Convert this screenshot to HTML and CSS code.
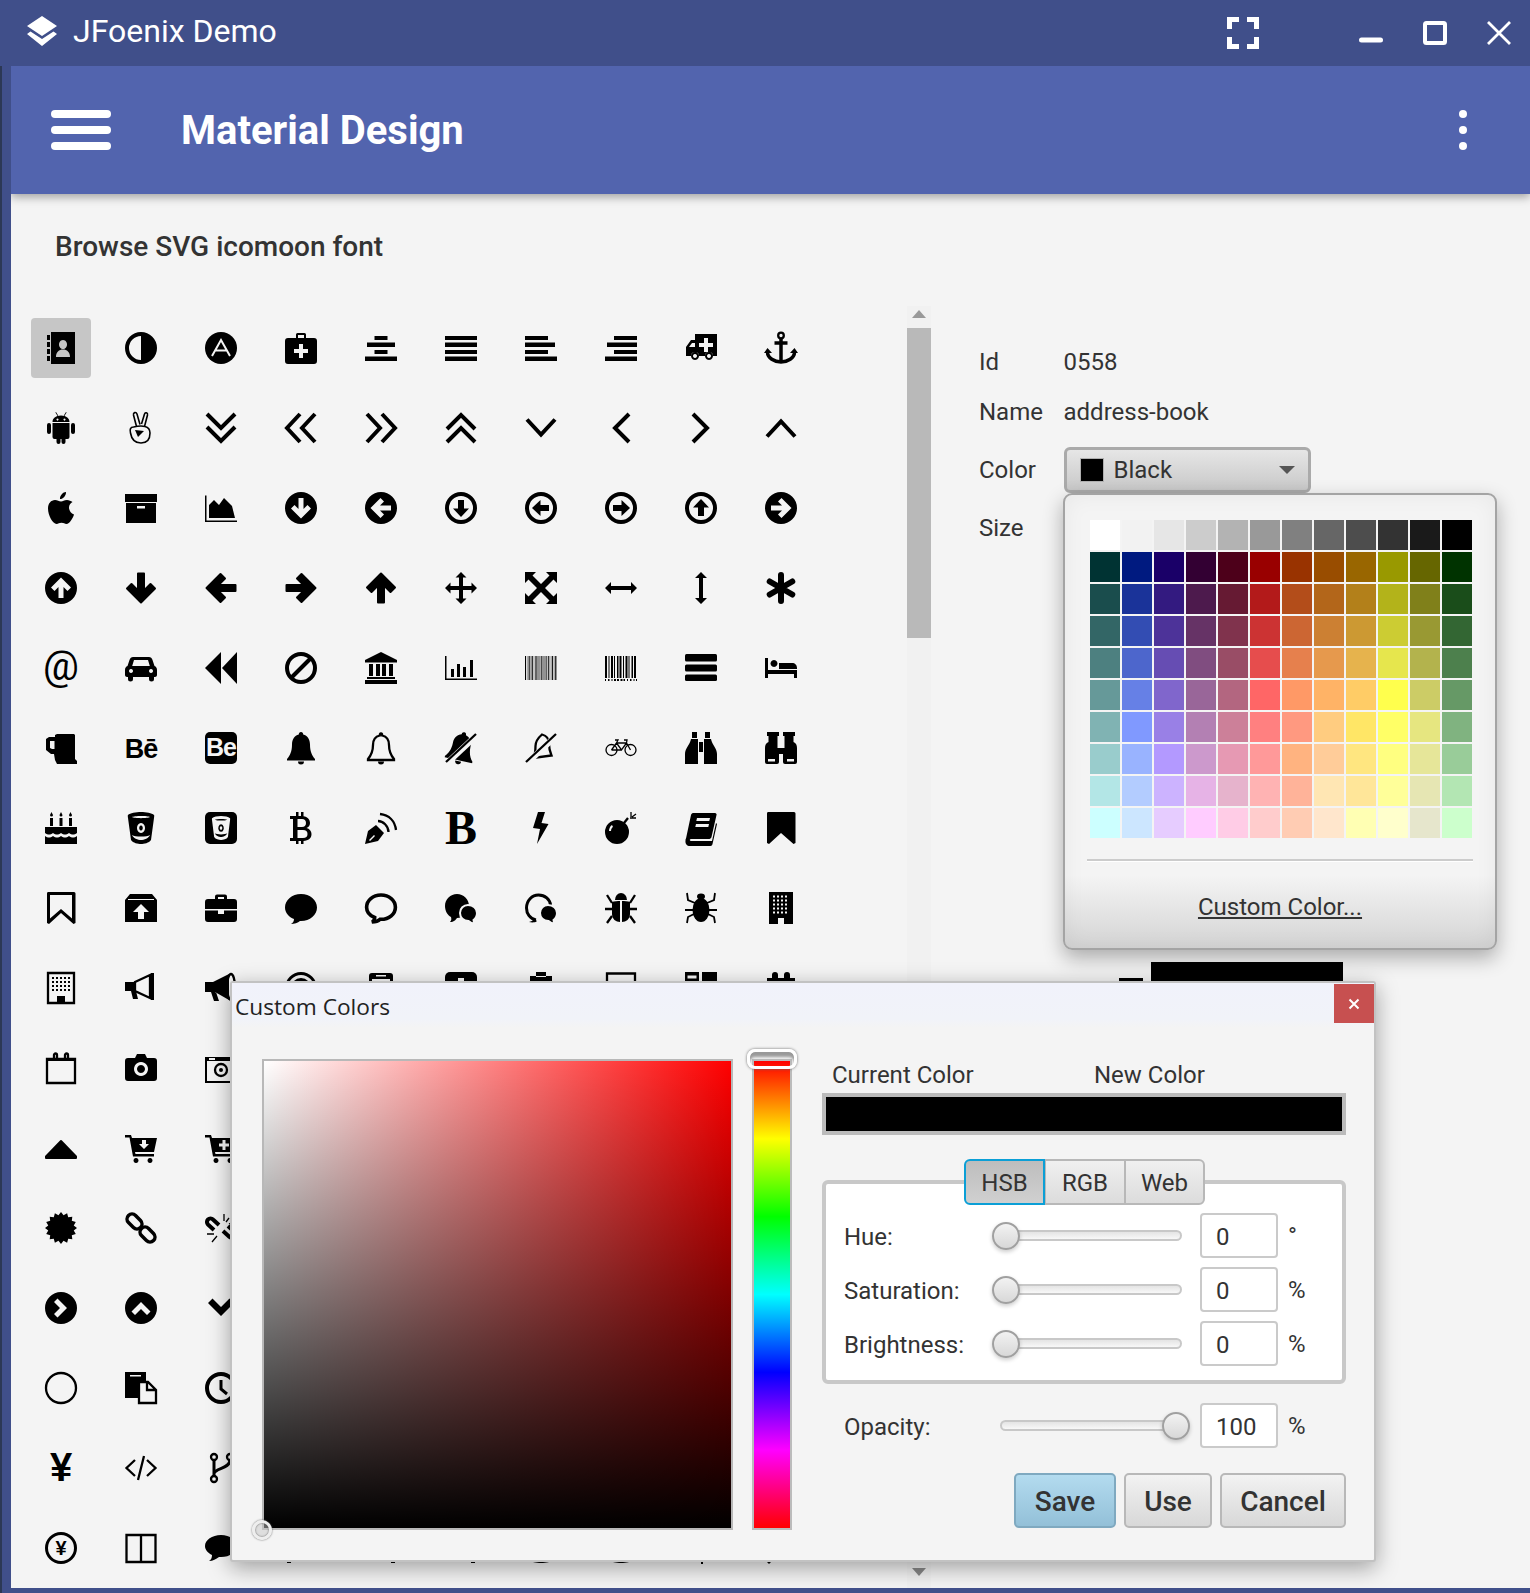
FILE: index.html
```html
<!DOCTYPE html>
<html lang="en">
<head>
<meta charset="utf-8">
<title>JFoenix Demo</title>
<link rel="stylesheet" href="styles.css">
</head>
<body>
<svg class="defs" width="0" height="0">
	<defs>
		<path id="discArrow" d="M16 0a16 16 0 1 0 0 32 16 16 0 0 0 0-32z M13.500 6h5v11l4-4 3.500 3.500L16 26.500 6 16.500 9.500 13l4 4z"/>
		<path id="ringArrow" d="M16 0a16 16 0 1 0 0 32 16 16 0 0 0 0-32z M16 4a12 12 0 1 1 0 24 12 12 0 0 1 0-24z M13 8h6v8.500h5l-8 8.500-8-8.500h5z"/>
		<path id="boldArrow" d="M13 1.500h6v17l6.500-6.500 4.500 4.500L16 30.500 2 16.500 6.500 12l6.500 6.500z"/>
		<path id="discChevron" d="M16 0a16 16 0 1 0 0 32 16 16 0 0 0 0-32z M12.500 6.500l9.500 9.500-9.500 9.500-3.500-3.500 6-6-6-6z"/>
		<path id="longArrow" d="M0 16l6-6v4h20v-4l6 6-6 6v-4H6v4z"/>
		<path id="bell" d="M16 0c1.500 0 2.200 1 2.200 2.500 4.300 1 6.800 5 6.800 10 0 7 2 11 5 14.500v1.500H2V27c3-3.500 5-7.500 5-14.500 0-5 2.500-9 6.800-10C13.800 1 14.500 0 16 0z M13 29.500h6a3 3 0 0 1-6 0z"/>
		<path id="bucket" d="M3 3c2-2 8-3 13-3s11 1 13 3c.5.500 0 2.500 0 3L26 28c-2 3-7 4-10 4s-8-1-10-4L3 6c0-.5-.5-2.500 0-3z M7 5c2 1.500 16 1.500 18 0-2-1.500-16-1.500-18 0z M16 11a4 5 0 1 0 .01 0z M16 13.500a1.800 2.500 0 1 1-.01 0z M7 23c1 3 6 5 9 5s8-2 9-5c-3 2-15 2-18 0z"/>
		<path id="bubbleShape" d="M16 2c9 0 16 6 16 13.500S25 29 16 29h-1c-2 2-6 3-9 3 2-1 3-3 3-5C4 25 0 21 0 15.500 0 8 7 2 16 2z"/>
		<path id="cart" d="M0 3h6l1 3h25l-3 14H10l.5 2H29v2.500H8L4.500 5.500H0z M11 26a2.500 2.500 0 1 0 .01 0z M25 26a2.500 2.500 0 1 0 .01 0z"/>
	</defs>
</svg>

<div class="window">
	<div class="titlebar">
		<svg class="logo" viewBox="0 0 30 30"><path d="M15 0l15 10-15 10L0 10z M3.500 15.500L15 23l11.500-7.500L30 18 15 30 0 18z"/></svg>
		<span class="appname">JFoenix Demo</span>
		<svg class="winbtn full" viewBox="0 0 32 32"><path d="M0 0h12v5H5v7H0z M20 0h12v12h-5V5h-7z M0 20h5v7h7v5H0z M27 20h5v12H20v-5h7z"/></svg>
		<svg class="winbtn min" viewBox="0 0 24 24"><path class="wl" d="M2.500 19h19"/></svg>
		<svg class="winbtn max" viewBox="0 0 24 24"><rect class="wm" x="2" y="2" width="20" height="20" rx="1.500"/></svg>
		<svg class="winbtn close" viewBox="0 0 24 24"><path class="wx" d="M1 1l22 22M23 1L1 23"/></svg>
	</div>

	<div class="app">
		<div class="header">
			<div class="burger"><i></i><i></i><i></i></div>
			<span class="apptitle">Material Design</span>
			<div class="more"><i></i><i></i><i></i></div>
		</div>

		<div class="heading">Browse SVG icomoon font</div>

		<div class="browser">
			<div class="icons">
				<ul class="row">
					<li class="cell select"><svg viewBox="0 0 32 32"><path d="M6 0h24v32H6z M2 3h3v5H2z M2 10h3v5H2z M2 17h3v5H2z M2 24h3v5H2z M18 8a4 4.500 0 1 0 .01 0z M11 25c0-5 3-7.500 7-7.500s7 2.500 7 7.500z"/></svg></li>
					<li class="cell"><svg viewBox="0 0 32 32"><path d="M16 0a16 16 0 1 0 0 32 16 16 0 0 0 0-32z M16 4v24a12 12 0 0 1 0-24z"/></svg></li>
					<li class="cell"><svg viewBox="0 0 32 32"><circle cx="16" cy="16" r="16"/><path class="cut" d="M7 24L16 8l9 16M10.500 18.500h11"/></svg></li>
					<li class="cell"><svg viewBox="0 0 32 32"><path d="M3 6h26a3 3 0 0 1 3 3v20a3 3 0 0 1-3 3H3a3 3 0 0 1-3-3V9a3 3 0 0 1 3-3z M11 6V2.500A1.500 1.500 0 0 1 12.500 1h7A1.500 1.500 0 0 1 21 2.500V6h-2V3h-6v3z M14 12h4v5h5v4h-5v5h-4v-5H9v-4h5z"/></svg></li>
					<li class="cell"><svg viewBox="0 0 32 32"><path d="M9.500 4h13v4h-13z M2 10.500h28V15H2z M9.500 18h13v4h-13z M0 24.500h32V29H0z"/></svg></li>
					<li class="cell"><svg viewBox="0 0 32 32"><path d="M0 4h32v4H0z M0 10.500h32V15H0z M0 18h32v4H0z M0 24.500h32V29H0z"/></svg></li>
					<li class="cell"><svg viewBox="0 0 32 32"><path d="M0 4h23v4H0z M0 10.500h30V15H0z M0 18h23v4H0z M0 24.500h32V29H0z"/></svg></li>
					<li class="cell"><svg viewBox="0 0 32 32"><path d="M9 4h23v4H9z M2 10.500h30V15H2z M9 18h23v4H9z M0 24.500h32V29H0z"/></svg></li>
					<li class="cell"><svg viewBox="0 0 32 32"><path d="M10 2h22v22h-4a4 4 0 0 0-8 0h-6a4 4 0 0 0-8 0H1V15l5-7h4z M4 15l3-4h3v4z M19 6h4v5h5v4h-5v5h-4v-5h-5v-4h5z M10 20a4 4 0 1 0 .01 0z M10 22a2 2 0 1 1-.01 0z M24 20a4 4 0 1 0 .01 0z M24 22a2 2 0 1 1-.01 0z"/></svg></li>
					<li class="cell"><svg viewBox="0 0 32 32"><circle class="ln w2" cx="16" cy="3.500" r="2.800"/><path class="ln w35" d="M16 6v24M9.500 11h13M2.500 20c0 6 7 10 13.500 10s13.500-4 13.500-10"/><path d="M-1 21l3.500-5 4.500 5z M25 21l4.500-5 3.500 5z"/></svg></li>
				</ul>
				<ul class="row">
					<li class="cell"><svg viewBox="0 0 32 32"><path d="M7.500 10c0-3.500 3-6.500 8.500-6.500s8.500 3 8.500 6.500z M12.500 6.500a1 1 0 1 0 .01 0z M19.500 6.500a1 1 0 1 0 .01 0z M7.500 11h17v14a2 2 0 0 1-2 2h-2v3a2 2 0 0 1-4 0v-3h-1v3a2 2 0 0 1-4 0v-3h-2a2 2 0 0 1-2-2z M4 11a2 2 0 0 1 2 2v7a2 2 0 0 1-4 0v-7a2 2 0 0 1 2-2z M28 11a2 2 0 0 1 2 2v7a2 2 0 0 1-4 0v-7a2 2 0 0 1 2-2z M11 0l2.200 3.500-.6.400-2.200-3.500z M21 0l-2.200 3.500.6.400 2.200-3.500z"/></svg></li>
					<li class="cell"><svg viewBox="0 0 32 32"><path class="ln w16" d="M11.500 14.500L8.500 3c-.5-2.500 2.500-3.500 3.500-1L15 12.500 M16.500 12l3-10c.5-2 3.500-1.500 3 1l-3 11.500 M8.500 15c-3 0-4 2.500-3 6 1 6 4.500 10 10.500 10s9-4 9-10c0-3.500-1.500-5.500-5-6.500-4-1-7-.5-11.500.500z"/><path d="M10 18l9 1-6 6z"/></svg></li>
					<li class="cell"><svg viewBox="0 0 32 32"><path class="ln w4" d="M2 2l14 14L30 2 M2 15l14 14 14-14"/></svg></li>
					<li class="cell"><svg viewBox="0 0 32 32"><path class="ln w4" d="M15 2L2 16l13 14 M30 2L17 16l13 14"/></svg></li>
					<li class="cell"><svg viewBox="0 0 32 32"><path class="ln w4" d="M2 2l13 14L2 30 M17 2l13 14-13 14"/></svg></li>
					<li class="cell"><svg viewBox="0 0 32 32"><path class="ln w4" d="M2 17L16 3l14 14 M2 30l14-14 14 14"/></svg></li>
					<li class="cell"><svg viewBox="0 0 32 32"><path class="ln w4" d="M2 7.500l14 15 14-15"/></svg></li>
					<li class="cell"><svg viewBox="0 0 32 32"><path class="ln w4" d="M24 2L10 16l14 14"/></svg></li>
					<li class="cell"><svg viewBox="0 0 32 32"><path class="ln w4" d="M8 2l14 14L8 30"/></svg></li>
					<li class="cell"><svg viewBox="0 0 32 32"><path class="ln w4" d="M2 24.500l14-15 14 15"/></svg></li>
				</ul>
				<ul class="row">
					<li class="cell"><svg viewBox="0 0 32 32"><path d="M22 8c-3 0-4 1.500-6 1.500S12.500 8 10 8C6 8 3 11.500 3 16.500c0 7 5 15.500 8.500 15.500 2 0 2.500-1.200 5-1.200s3 1.200 5 1.200c3 0 6.500-6 7.500-9.500-3-1-5-4-5-7 0-2.500 1.500-4.500 3.500-5.500C26 9 24 8 22 8z M21 0c.3 3-2.500 7-6 7-.3-3 2.800-7 6-7z"/></svg></li>
					<li class="cell"><svg viewBox="0 0 32 32"><path d="M0 2h32v8H0z M1 11h30v20H1z M12 14h8v2.500h-8z"/></svg></li>
					<li class="cell"><svg viewBox="0 0 32 32"><path d="M0 3.500h1.500V28.500H32V30H0z M4 26V13l5-5 5 5 5-7 8 8 3 12z"/></svg></li>
					<li class="cell"><svg viewBox="0 0 32 32"><use href="#discArrow"/></svg></li>
					<li class="cell"><svg viewBox="0 0 32 32"><use href="#discArrow" transform="rotate(90 16 16)"/></svg></li>
					<li class="cell"><svg viewBox="0 0 32 32"><use href="#ringArrow"/></svg></li>
					<li class="cell"><svg viewBox="0 0 32 32"><use href="#ringArrow" transform="rotate(90 16 16)"/></svg></li>
					<li class="cell"><svg viewBox="0 0 32 32"><use href="#ringArrow" transform="rotate(-90 16 16)"/></svg></li>
					<li class="cell"><svg viewBox="0 0 32 32"><use href="#ringArrow" transform="rotate(180 16 16)"/></svg></li>
					<li class="cell"><svg viewBox="0 0 32 32"><use href="#discArrow" transform="rotate(-90 16 16)"/></svg></li>
				</ul>
				<ul class="row">
					<li class="cell"><svg viewBox="0 0 32 32"><use href="#discArrow" transform="rotate(180 16 16)"/></svg></li>
					<li class="cell"><svg viewBox="0 0 32 32"><use class="soft" href="#boldArrow"/></svg></li>
					<li class="cell"><svg viewBox="0 0 32 32"><use class="soft" href="#boldArrow" transform="rotate(90 16 16)"/></svg></li>
					<li class="cell"><svg viewBox="0 0 32 32"><use class="soft" href="#boldArrow" transform="rotate(-90 16 16)"/></svg></li>
					<li class="cell"><svg viewBox="0 0 32 32"><use class="soft" href="#boldArrow" transform="rotate(180 16 16)"/></svg></li>
					<li class="cell"><svg viewBox="0 0 32 32"><path d="M16 0l5.500 5.500H18V14h8.500v-3.500L32 16l-5.500 5.500V18H18v8.500h3.500L16 32l-5.500-5.500H14V18H5.500v3.500L0 16l5.500-5.500V14H14V5.500h-3.500z"/></svg></li>
					<li class="cell"><svg viewBox="0 0 32 32"><path d="M0 0h11L7.500 3.500 16 12l8.500-8.500L21 0h11v11l-3.500-3.500L20 16l8.500 8.500L32 21v11H21l3.500-3.500L16 20l-8.500 8.500L11 32H0V21l3.500 3.500L12 16 3.500 7.500 0 11z"/></svg></li>
					<li class="cell"><svg viewBox="0 0 32 32"><use href="#longArrow"/></svg></li>
					<li class="cell"><svg viewBox="0 0 32 32"><use href="#longArrow" transform="rotate(90 16 16)"/></svg></li>
					<li class="cell"><svg viewBox="0 0 32 32"><path class="ln astr" d="M16 3v26 M4.700 9.500l22.600 13 M4.700 22.500l22.600-13"/></svg></li>
				</ul>
				<ul class="row">
					<li class="cell"><svg viewBox="0 0 32 32"><text class="glyph at" x="16" y="28">@</text></svg></li>
					<li class="cell"><svg viewBox="0 0 32 32"><path d="M8 5h16c1.500 0 3 1 3.500 3l2 6c1.500.500 2.500 2 2.500 4v5c0 1-1 2-2 2h-1v2a2.500 2.500 0 0 1-5 0v-2H8v2a2.500 2.500 0 0 1-5 0v-2H2c-1 0-2-1-2-2v-5c0-2 1-3.500 2.500-4l2-6C5 6 6.500 5 8 5z M9 8l-1.800 6h17.600L23 8z M6 17a2 2 0 1 0 .01 0z M26 17a2 2 0 1 0 .01 0z"/></svg></li>
					<li class="cell"><svg viewBox="0 0 32 32"><path d="M16 0v32L0 16z M32 0v32L17 16z"/></svg></li>
					<li class="cell"><svg viewBox="0 0 32 32"><circle class="ln w4" cx="16" cy="16" r="14"/><path class="ln w4" d="M25 7L7 25"/></svg></li>
					<li class="cell"><svg viewBox="0 0 32 32"><path d="M16 0l16 8v2.500H0V8z M0 28h32v4H0z M2 25h28v2H2z M4 12h4v12H4z M11 12h4v12h-4z M17 12h4v12h-4z M24 12h4v12h-4z"/></svg></li>
					<li class="cell"><svg viewBox="0 0 32 32"><path d="M0 4h1.500v22.500H32V28H0z M6 17h3v8H6z M12 12h3v13h-3z M18 15h3v10h-3z M25 8h3v17h-3z"/></svg></li>
					<li class="cell"><svg viewBox="0 0 32 32"><path class="ln bars1" d="M0 16H32"/></svg></li>
					<li class="cell"><svg viewBox="0 0 32 32"><path class="ln bars2" d="M0 15H32"/><path class="ln bars3" d="M0 28H32"/></svg></li>
					<li class="cell"><svg viewBox="0 0 32 32"><rect y="2" width="32" height="7.500" rx="1.500"/><rect y="12.500" width="32" height="7" rx="1.500"/><rect y="22.500" width="32" height="6.500" rx="1.500"/></svg></li>
					<li class="cell"><svg viewBox="0 0 32 32"><path d="M0 6h3v12h29v8h-3v-4H3v4H0z M9 8a3.500 3.500 0 1 0 .01 0z M14 11h13c3 0 5 2 5 5v1H14z"/></svg></li>
				</ul>
				<ul class="row">
					<li class="cell"><svg viewBox="0 0 32 32"><path d="M10 3l2-1h17l1 1v24l2 2v3H12l-2-4-1-6H6l-5-4V7l3-2h6z M5 9v7l2 1h2.500V9z"/></svg></li>
					<li class="cell"><svg viewBox="0 0 32 32"><text class="glyph be" x="16" y="26">Bē</text></svg></li>
					<li class="cell"><svg viewBox="0 0 32 32"><rect width="32" height="32" rx="5"/><text class="glyph bes" x="16" y="24">Be</text></svg></li>
					<li class="cell"><svg viewBox="0 0 32 32"><use href="#bell"/></svg></li>
					<li class="cell"><svg viewBox="0 0 32 32"><path class="ln w2" d="M16 1.500c1 0 1.200.800 1.200 2 4.300 1 6.800 4.500 6.800 9.500 0 6.500 2 10.500 5 14v1H3v-1c3-3.500 5-7.500 5-14 0-5 2.500-8.500 6.800-9.500 0-1.200.200-2 1.200-2z"/><path d="M13 29.500h6a3 3 0 0 1-6 0z"/></svg></li>
					<li class="cell"><svg viewBox="0 0 32 32"><use href="#bell" transform="rotate(12 16 16)"/><path class="cut w6" d="M0 33L32 3"/><path class="ln w2" d="M1 30L31 2"/></svg></li>
					<li class="cell"><svg viewBox="0 0 32 32"><path class="ln w2" d="M17 2.500c4 1 7 4.500 7 9.500 0 4 1 8 2.500 11.500L8 26c2-3 2.500-6 2.500-12 0-5 2.500-8 6.500-11.500z"/><path class="cut w6" d="M0 33L32 3"/><path class="ln w2" d="M1 30L31 2"/></svg></li>
					<li class="cell"><svg viewBox="0 0 32 32"><circle class="ln w1" cx="6.500" cy="18" r="5.500"/><circle class="ln w1" cx="25.500" cy="18" r="5.500"/><path class="ln w1" d="M6.500 18l5-7h10l4 7 M11.500 11l5 7 5-7 M16.500 18h-10 M19 8h3l-.5 3 M10 8h3l-1.500 3"/></svg></li>
					<li class="cell"><svg viewBox="0 0 32 32"><path d="M7 0h5v6H7z M20 0h5v6h-5z M13 7v25H0V22c0-6 5-9 6-15z M19 7v25h13V22c0-6-5-9-6-15z M14 10h4v10h-4z"/></svg></li>
					<li class="cell"><svg viewBox="0 0 32 32"><path d="M2 0h12v4h-1.500v12h7V4H18V0h12v4h-1.500v6c2.500 1 3.500 3 3.500 6v14a2 2 0 0 1-2 2H20a2 2 0 0 1-2-2v-8h-4v8a2 2 0 0 1-2 2H2a2 2 0 0 1-2-2V16c0-3 1-5 3.500-6V4H2z M3 27h7v2.500H3z M22 27h7v2.500h-7z"/></svg></li>
				</ul>
				<ul class="row">
					<li class="cell"><svg viewBox="0 0 32 32"><path d="M5 6h3v8H5z M14.500 6h3v8h-3z M24 6h3v8h-3z M6.500 0l1.500 3a1.500 1.500 0 0 1-3 0z M16 0l1.500 3a1.500 1.500 0 0 1-3 0z M25.500 0L27 3a1.500 1.500 0 0 1-3 0z M0 15h32v6c-3 2-5 2-8 0-3 2-5 2-8 0-3 2-5 2-8 0-3 2-5 2-8 0z M0 24c3 2 5 2 8 0 3 2 5 2 8 0 3 2 5 2 8 0 3 2 5 2 8 0v8H0z"/></svg></li>
					<li class="cell"><svg viewBox="0 0 32 32"><use href="#bucket"/></svg></li>
					<li class="cell"><svg viewBox="0 0 32 32"><rect width="32" height="32" rx="5"/><use class="bgfill" href="#bucket" transform="translate(5 4) scale(.69 .75)"/></svg></li>
					<li class="cell"><svg viewBox="0 0 32 32"><path d="M11 0h2.500v4H16V0h2.500v4.200c4 .8 6.500 3 6.500 6.800 0 2.500-1.500 4.200-3.500 5 3 .8 5 3 5 6 0 4.500-3 6.500-8 7V32H16v-3h-2.500v3H11v-3H5v-3h3V7H5V4h6z M12.500 7v8H17c2.500 0 4-1.500 4-4s-1.500-4-4-4z M12.500 18v8H18c3 0 4.500-1.500 4.500-4s-1.500-4-4.500-4z"/></svg></li>
					<li class="cell"><svg viewBox="0 0 32 32"><path d="M0 32l3-13 8-6 8 8-6 8z M4 28l5-5 1 1-5 5z"/><path class="ln w2" d="M13 9c5 0 10.500 5 10.500 11 M15 2c9 1 15 7 16 16"/></svg></li>
					<li class="cell"><svg viewBox="0 0 32 32"><text class="glyph serif" x="16" y="32">B</text></svg></li>
					<li class="cell"><svg viewBox="0 0 32 32"><path d="M13 0h7l-3.500 11 7 1L12 32l3-15-7-1z"/></svg></li>
					<li class="cell"><svg viewBox="0 0 32 32"><path d="M12 8a12 12 0 1 0 0 24 12 12 0 0 0 0-24z M7 13c-2 1-3 4-3 6h2c0-2 1-3.500 2-4z"/><path class="ln w2" d="M19 11l4-5"/><path class="ln w1" d="M26 0v5 M31 2l-4 3 M25 6h6"/></svg></li>
					<li class="cell"><svg viewBox="0 0 32 32"><path d="M8 1h22c1 0 2 1 1.500 2l-5 22c-.5 1.500-1.500 2-3 2H6c-1 0-1.500 1-1 1.500s1 .5 2 .5h20l4-18 1 1-4.500 20c-.2 1-1 2-2 2H5c-3 0-5-2-4.500-5.500 0-1 0-1 .5-2L6 3c.3-1 1-2 2-2z M12 6h13l-.7 3h-13z M11 12h13l-.7 3H10.300z"/></svg></li>
					<li class="cell"><svg viewBox="0 0 32 32"><path d="M3 0h26a1.500 1.500 0 0 1 1.500 1.500V31l-2 1L16 21 4 32l-2-1V1.500A1.500 1.500 0 0 1 3 0z"/></svg></li>
				</ul>
				<ul class="row">
					<li class="cell"><svg viewBox="0 0 32 32"><path d="M3 0h26a1.500 1.500 0 0 1 1.500 1.500V31l-2 1L16 21 4 32l-2-1V1.500A1.500 1.500 0 0 1 3 0z M5 3v23.500L16 17l11 9.500V3z"/></svg></li>
					<li class="cell"><svg viewBox="0 0 32 32"><path d="M5 2h22l5 6v22H0V8z M16 12l-8 8h5v7h6v-7h5z M3 7h26v1H3z"/></svg></li>
					<li class="cell"><svg viewBox="0 0 32 32"><path d="M10 7V4.500a2 2 0 0 1 2-2h8a2 2 0 0 1 2 2V7h7a3 3 0 0 1 3 3v7H0v-7a3 3 0 0 1 3-3z M13 5v2h6V5z M0 18.500h13V22h6v-3.500h13V27a3 3 0 0 1-3 3H3a3 3 0 0 1-3-3z"/></svg></li>
					<li class="cell"><svg viewBox="0 0 32 32"><use href="#bubbleShape"/></svg></li>
					<li class="cell"><svg viewBox="0 0 32 32"><use class="ln w4" href="#bubbleShape" transform="translate(1.600 1.200) scale(.9)"/></svg></li>
					<li class="cell"><svg viewBox="0 0 32 32"><path d="M12 2c6.500 0 12 5 12 12s-5.500 12-12 12c-1.500 2-3 4-7 4 1.500-1.500 1.500-3 1-5-3.500-2-6-6-6-11C0 7 5.500 2 12 2z"/><path class="softcut" d="M23 13c5 0 9 3.500 9 8 0 3-1.500 5.500-3.500 7 0 1.500.5 2.500 1.500 3.500-3 0-5-1-6.500-2.500-5 0-8.500-3.500-8.500-8 0-4.500 3.500-8 8-8z"/></svg></li>
					<li class="cell"><svg viewBox="0 0 32 32"><path class="ln w3" d="M11 28c-6-1-9.500-6.500-9.500-12C1.500 8.500 7 3 13.500 3 20 3 25 7.500 25.500 13"/><path class="softcut" d="M23 13c5 0 9 3.500 9 8 0 3-1.500 5.500-3.500 7 0 1.500.5 2.500 1.500 3.500-3 0-5-1-6.500-2.500-5 0-8.500-3.500-8.500-8 0-4.500 3.500-8 8-8z"/><path d="M4 30c2-.5 4-1.500 5-3l3 2c-2 2-6 1.500-8 1z"/></svg></li>
					<li class="cell"><svg viewBox="0 0 32 32"><path d="M10 8a6 7 0 0 1 12 0z M7 10c2-1 6-1 8-1v21c-4 0-8-3-8-8z M25 10c-2-1-6-1-8-1v21c4 0 8-3 8-8z"/><path class="ln w2" d="M2 3l5 8 M30 3l-5 8 M0 17h7 M25 17h7 M2 31l5-7 M30 31l-5-7"/></svg></li>
					<li class="cell"><svg viewBox="0 0 32 32"><ellipse cx="16" cy="18" rx="8.500" ry="12"/><ellipse cx="16" cy="4.500" rx="4" ry="3"/><path class="ln w1h" d="M2 1l1 7 7 3 M30 1l-1 7-7 3 M0 18h32 M2 31l1-6 6-3 M30 31l-1-6-6-3"/></svg></li>
					<li class="cell"><svg viewBox="0 0 32 32"><path d="M4 0h24v32H4z M13 26h6v6h-6z"/><path class="cut dots" d="M8 4.500H24 M8 8.500H24 M8 12.500H24 M8 16.500H24 M8 20.500H24"/></svg></li>
				</ul>
				<ul class="row">
					<li class="cell"><svg viewBox="0 0 32 32"><path class="ln w2" d="M3 1h26v30H3z"/><path class="ln dots2" d="M7 6H25 M7 10H25 M7 14H25 M7 18H25"/><path d="M12 24h8v8h-8z"/></svg></li>
					<li class="cell"><svg viewBox="0 0 32 32"><path d="M0 10h10v9H0z M6 19h5l2 8H8z"/><path class="ln w2" d="M10 10L25 3v23l-15-7z"/><path d="M26 1h3v27h-3z"/></svg></li>
					<li class="cell"><svg viewBox="0 0 32 32"><path d="M0 10h8L24 2v26L10 20H0z M6 20h5l3 9H9z"/><ellipse class="ln w2" cx="26" cy="15" rx="4" ry="13"/></svg></li>
					<li class="cell"><svg viewBox="0 0 32 32"><circle class="ln w3" cx="16" cy="16" r="14.500"/><circle class="ln w3" cx="16" cy="16" r="8.500"/></svg></li>
					<li class="cell"><svg viewBox="0 0 32 32"><path d="M7 1h18a3 3 0 0 1 3 3v28H4V4a3 3 0 0 1 3-3z M7 7v22h18V7z M11 3h10v1.500H11z"/></svg></li>
					<li class="cell"><svg viewBox="0 0 32 32"><rect width="32" height="32" rx="5"/><path class="bgfill" d="M13 6h6v6h6v6h-6v6h-6v-6H7v-6h6z"/></svg></li>
					<li class="cell"><svg viewBox="0 0 32 32"><path d="M11 0h10v5H11z M5 4h22v28H5z"/></svg></li>
					<li class="cell"><svg viewBox="0 0 32 32"><path class="ln w2" d="M2 1.500h28v29H2z"/></svg></li>
					<li class="cell"><svg viewBox="0 0 32 32"><path d="M0 0h14v32H0z M2.500 3.500h9v3h-9z M17 0h15v32H17z"/></svg></li>
					<li class="cell"><svg viewBox="0 0 32 32"><path d="M2 6h5V3a3 3 0 0 1 6 0v3h6V3a3 3 0 0 1 6 0v3h5v26H2z"/></svg></li>
				</ul>
				<ul class="row">
					<li class="cell"><svg viewBox="0 0 32 32"><path class="ln w2" d="M2 7h28v24H2z"/><path d="M2 6h28v3H2z"/><path class="ln w2" d="M9 9V3a1.500 1.500 0 0 1 3 0v6 M20 9V3a1.500 1.500 0 0 1 3 0v6"/></svg></li>
					<li class="cell"><svg viewBox="0 0 32 32"><path d="M3 6h7l2-4h8l2 4h7a3 3 0 0 1 3 3v17a3 3 0 0 1-3 3H3a3 3 0 0 1-3-3V9a3 3 0 0 1 3-3z M16 10a7 7 0 1 0 .01 0z M16 13a4 4 0 1 1-.01 0z"/></svg></li>
					<li class="cell"><svg viewBox="0 0 32 32"><path d="M0 5h32v26H0z M2 9v20h28V9z M4 6h6v2H4z"/><circle class="ln w2" cx="16" cy="18" r="6"/><circle cx="16" cy="18" r="2"/></svg></li>
				</ul>
				<ul class="row">
					<li class="cell"><svg viewBox="0 0 32 32"><path class="soft" d="M16 9l15 15.500v1.500H1v-1.500z"/></svg></li>
					<li class="cell"><svg viewBox="0 0 32 32"><use href="#cart"/><path class="bgfill" d="M17 8h4v4h3l-5 5-5-5h3z"/></svg></li>
					<li class="cell"><svg viewBox="0 0 32 32"><use href="#cart"/><path class="bgfill" d="M17.500 8h3v3.500H24v3h-3.500V18h-3v-3.500H14v-3h3.500z"/></svg></li>
				</ul>
				<ul class="row">
					<li class="cell"><svg viewBox="0 0 32 32"><polygon points="32,16 28.750,18.540 30.780,22.120 26.800,23.220 27.310,27.310 23.220,26.800 22.120,30.780 18.540,28.750 16,32 13.460,28.750 9.880,30.780 8.780,26.800 4.690,27.310 5.200,23.220 1.220,22.120 3.250,18.540 0,16 3.250,13.460 1.220,9.880 5.200,8.780 4.690,4.690 8.780,5.200 9.880,1.220 13.460,3.250 16,0 18.540,3.250 22.120,1.220 23.220,5.200 27.310,4.690 26.800,8.780 30.780,9.880 28.750,13.460"/></svg></li>
					<li class="cell"><svg viewBox="0 0 32 32"><rect class="ln w35" x="1" y="4.500" width="17" height="10" rx="5" transform="rotate(45 9.500 9.500)"/><rect class="ln w35" x="14" y="17.500" width="17" height="10" rx="5" transform="rotate(45 22.500 22.500)"/></svg></li>
					<li class="cell"><svg viewBox="0 0 32 32"><path class="ln w4" d="M14 13L8 7.500a3.500 3.500 0 0 0-5 5L9 18 M18 19l6 5.500a3.500 3.500 0 0 0 5-5L23 14"/><path class="ln w1" d="M19 2v7 M2 22h7 M7 30l5-6 M24 6l-3 4 M30 9l-6 3"/></svg></li>
				</ul>
				<ul class="row">
					<li class="cell"><svg viewBox="0 0 32 32"><use href="#discChevron"/></svg></li>
					<li class="cell"><svg viewBox="0 0 32 32"><use href="#discChevron" transform="rotate(-90 16 16)"/></svg></li>
					<li class="cell"><svg viewBox="0 0 32 32"><path d="M3 11l4.500-4.500L16 15l8.500-8.500L29 11 16 24z"/></svg></li>
				</ul>
				<ul class="row">
					<li class="cell"><svg viewBox="0 0 32 32"><circle class="ln w2" cx="16" cy="16" r="15"/></svg></li>
					<li class="cell"><svg viewBox="0 0 32 32"><path d="M0 0h21v9h-7v17H0z M5 3h11v1.500H5z"/><path class="ln w2" d="M14 10h9l8 8v13H14z M22 10v8h9"/></svg></li>
					<li class="cell"><svg viewBox="0 0 32 32"><circle class="ln w4" cx="16" cy="16" r="14"/><path class="ln w3" d="M16 8v9l6 5"/></svg></li>
				</ul>
				<ul class="row">
					<li class="cell"><svg viewBox="0 0 32 32"><text class="glyph yen" x="16" y="29">¥</text></svg></li>
					<li class="cell"><svg viewBox="0 0 32 32"><path class="ln w2" d="M10 8L1.500 16l8.500 8 M22 8l8.500 8-8.500 8 M19 4l-6 24"/></svg></li>
					<li class="cell"><svg viewBox="0 0 32 32"><circle class="ln w2" cx="9" cy="5" r="3"/><circle class="ln w2" cx="9" cy="27" r="3"/><circle class="ln w2" cx="25" cy="5" r="3"/><path class="ln w3" d="M9 8v16 M9 22c0-6 16-5 16-14"/></svg></li>
				</ul>
				<ul class="row last">
					<li class="cell"><svg viewBox="0 0 32 32"><circle class="ln w3" cx="16" cy="16" r="14.500"/><text class="glyph yens" x="16" y="23">¥</text></svg></li>
					<li class="cell"><svg viewBox="0 0 32 32"><path class="ln w2" d="M1.500 3h29v27h-29z M16 3v27"/></svg></li>
					<li class="cell"><svg viewBox="0 0 32 32"><path d="M16 3c9 0 16 5 16 11s-7 11-16 11h-2c-3 2-6 4-10 4 2-1 3-3 3-6-4-2-7-5-7-9 0-6 7-11 16-11z"/></svg></li>
					<li class="cell"><svg viewBox="0 0 32 32"><path d="M2 28h4v3H2z"/></svg></li>
					<li class="cell"><svg viewBox="0 0 32 32"><path d="M26 28h4v3h-4z"/></svg></li>
					<li class="cell"><svg viewBox="0 0 32 32"><path d="M26 28h4v3h-4z"/></svg></li>
					<li class="cell"><svg viewBox="0 0 32 32"><path d="M4 28h24c-4 4-20 4-24 0z"/></svg></li>
					<li class="cell"><svg viewBox="0 0 32 32"><path d="M4 28h24c-4 4-20 4-24 0z"/></svg></li>
					<li class="cell"><svg viewBox="0 0 32 32"><path d="M16 28h2v4h-2z"/></svg></li>
					<li class="cell"><svg viewBox="0 0 32 32"><path d="M0 28h8l-4 4z"/></svg></li>
				</ul>
			</div>

			<div class="scrollbar">
				<b class="arrow up"></b>
				<i class="scrollthumb"></i>
				<b class="arrow down"></b>
			</div>

			<div class="info">
				<div class="details">
					<span>Id</span><span>0558</span>
					<span>Name</span><span>address-book</span>
					<span>Color</span>
					<div class="combo"><i class="chip"></i><span>Black</span><b class="caret"></b></div>
					<span>Size</span><span></span>
				</div>
				<svg class="preview" viewBox="0 0 224 224"><path d="M32 0h192v224H32z M0 16h24v24H0z"/></svg>
			</div>
		</div>

		<div class="popup">
			<div class="palette">
				<i style="background:#fff"></i><i style="background:#f2f2f2"></i><i style="background:#e6e6e6"></i><i style="background:#ccc"></i><i style="background:#b3b3b3"></i><i style="background:#999"></i><i style="background:#808080"></i><i style="background:#666"></i><i style="background:#4d4d4d"></i><i style="background:#333"></i><i style="background:#1a1a1a"></i><i style="background:#000"></i>
				<i style="background:#003333"></i><i style="background:#001a80"></i><i style="background:#1a0068"></i><i style="background:#330033"></i><i style="background:#4d001a"></i><i style="background:#990000"></i><i style="background:#993300"></i><i style="background:#994d00"></i><i style="background:#996600"></i><i style="background:#999900"></i><i style="background:#666600"></i><i style="background:#003300"></i>
				<i style="background:#1a4d4d"></i><i style="background:#1a3399"></i><i style="background:#331a80"></i><i style="background:#4d1a4d"></i><i style="background:#661a33"></i><i style="background:#b31a1a"></i><i style="background:#b34d1a"></i><i style="background:#b3661a"></i><i style="background:#b3801a"></i><i style="background:#b3b31a"></i><i style="background:#80801a"></i><i style="background:#1a4d1a"></i>
				<i style="background:#336666"></i><i style="background:#334db3"></i><i style="background:#4d3399"></i><i style="background:#663366"></i><i style="background:#80334d"></i><i style="background:#cc3333"></i><i style="background:#cc6633"></i><i style="background:#cc8033"></i><i style="background:#cc9933"></i><i style="background:#cccc33"></i><i style="background:#999933"></i><i style="background:#336633"></i>
				<i style="background:#4d8080"></i><i style="background:#4d66cc"></i><i style="background:#664db3"></i><i style="background:#804d80"></i><i style="background:#994d66"></i><i style="background:#e64d4d"></i><i style="background:#e6804d"></i><i style="background:#e6994d"></i><i style="background:#e6b34d"></i><i style="background:#e6e64d"></i><i style="background:#b3b34d"></i><i style="background:#4d804d"></i>
				<i style="background:#669999"></i><i style="background:#6680e6"></i><i style="background:#8066cc"></i><i style="background:#996699"></i><i style="background:#b36680"></i><i style="background:#ff6666"></i><i style="background:#ff9966"></i><i style="background:#ffb366"></i><i style="background:#ffcc66"></i><i style="background:#ffff4d"></i><i style="background:#cccc66"></i><i style="background:#669966"></i>
				<i style="background:#80b3b3"></i><i style="background:#8099ff"></i><i style="background:#9980e6"></i><i style="background:#b380b3"></i><i style="background:#cc8099"></i><i style="background:#ff8080"></i><i style="background:#ff9980"></i><i style="background:#ffcc80"></i><i style="background:#ffe666"></i><i style="background:#ffff66"></i><i style="background:#e6e680"></i><i style="background:#80b380"></i>
				<i style="background:#99cccc"></i><i style="background:#99b3ff"></i><i style="background:#b399ff"></i><i style="background:#cc99cc"></i><i style="background:#e699b3"></i><i style="background:#ff9999"></i><i style="background:#ffb380"></i><i style="background:#ffcc99"></i><i style="background:#ffe680"></i><i style="background:#ffff80"></i><i style="background:#e6e699"></i><i style="background:#99cc99"></i>
				<i style="background:#b3e6e6"></i><i style="background:#b3ccff"></i><i style="background:#ccb3ff"></i><i style="background:#e6b3e6"></i><i style="background:#e6b3cc"></i><i style="background:#ffb3b3"></i><i style="background:#ffb399"></i><i style="background:#ffe6b3"></i><i style="background:#ffe699"></i><i style="background:#ffff99"></i><i style="background:#e6e6b3"></i><i style="background:#b3e6b3"></i>
				<i style="background:#ccffff"></i><i style="background:#cce6ff"></i><i style="background:#e6ccff"></i><i style="background:#ffccff"></i><i style="background:#ffcce6"></i><i style="background:#ffcccc"></i><i style="background:#ffccb3"></i><i style="background:#ffe6cc"></i><i style="background:#ffffb3"></i><i style="background:#ffffcc"></i><i style="background:#e6e6cc"></i><i style="background:#ccffcc"></i>
			</div>
			<hr class="rule">
			<a class="customlink">Custom Color...</a>
		</div>

		<div class="dialog">
			<div class="dialogtitle">
				<span>Custom Colors</span>
				<span class="dialogclose"><svg viewBox="0 0 12 12"><path d="M1.500 1.500l9 9M10.500 1.500l-9 9"/></svg></span>
			</div>
			<div class="dialogbody">
				<div class="sbarea"><i class="cursor"></i></div>
				<div class="huebar"><i class="huethumb"></i></div>
				<div class="controls">
					<div class="swatchlabels"><span>Current Color</span><span>New Color</span></div>
					<div class="swatch"></div>
					<div class="panel">
						<div class="toggles">
							<span class="toggle on">HSB</span><span class="toggle">RGB</span><span class="toggle">Web</span>
						</div>
						<div class="field">
							<label>Hue:</label>
							<div class="slider"><i class="track"></i><i class="thumb"></i></div>
							<span class="num">0</span><span>°</span>
						</div>
						<div class="field">
							<label>Saturation:</label>
							<div class="slider"><i class="track"></i><i class="thumb"></i></div>
							<span class="num">0</span><span>%</span>
						</div>
						<div class="field">
							<label>Brightness:</label>
							<div class="slider"><i class="track"></i><i class="thumb"></i></div>
							<span class="num">0</span><span>%</span>
						</div>
					</div>
					<div class="field opacity">
						<label>Opacity:</label>
						<div class="slider"><i class="track"></i><i class="thumb"></i></div>
						<span class="num">100</span><span>%</span>
					</div>
					<div class="actions">
						<span class="btn save">Save</span><span class="btn use">Use</span><span class="btn cancel">Cancel</span>
					</div>
				</div>
			</div>
		</div>
	</div>
</div>
</body>
</html>
```

FILE: styles.css
```css
*{
	padding: 0;
	margin: 0;
	box-sizing: border-box;
}
body{
	font: 24px Roboto, "Noto Sans", sans-serif;
	color: #333;
	background: #404f8a;
}
ul,li{
	list-style: none;
}
i,b{
	display: block;
}
.defs{
	position: absolute;
}
.window{
	display: flex;
	flex-direction: column;
	width: 1530px;
	height: 1593px;
	overflow: hidden;
	background: #404f8a;
	box-shadow: inset 2px 0 0 #2c3855;
}

/* 标题栏 */
.titlebar{
	display: flex;
	align-items: center;
	flex: none;
	height: 66px;
	padding-left: 27px;
	background: #404f8a;
	color: #fff;
}
.logo{
	width: 30px;
	height: 30px;
	margin-bottom: 4px;
	fill: #fff;
}
.appname{
	flex: 1;
	margin: 0 0 4px 16px;
	font-size: 32px;
}
.winbtn{
	flex: none;
	fill: #fff;
}
.full{
	width: 32px;
	height: 32px;
	margin-right: 100px;
}
.min,.max,.close{
	width: 24px;
	height: 24px;
	margin-right: 40px;
}
.close{
	margin-right: 19px;
}
.wl,.wm,.wx{
	fill: none;
	stroke: #fff;
}
.wl{
	stroke-width: 5;
	stroke-linecap: round;
}
.wm{
	stroke-width: 4;
}
.wx{
	stroke-width: 2.800;
}

/* 内容区 */
.app{
	position: relative;
	display: flex;
	flex-direction: column;
	flex: 1;
	min-height: 0;
	margin: 0 0 5px 11px;
	overflow: hidden;
	background: #f4f4f4;
}
.header{
	position: relative;
	z-index: 1;
	display: flex;
	align-items: center;
	flex: none;
	height: 128px;
	padding-left: 40px;
	background: #5264ae;
	box-shadow: 0 3px 9px rgba(0,0,0,.35);
	color: #fff;
}
.burger i{
	width: 60px;
	height: 8px;
	margin: 8px 0;
	border-radius: 4px;
	background: #fff;
}
.apptitle{
	flex: 1;
	margin-left: 70px;
	font-size: 40px;
	font-weight: 700;
}
.more{
	margin-right: 63px;
}
.more i{
	width: 8px;
	height: 8px;
	margin: 8px 0;
	border-radius: 50%;
	background: #fff;
}
.heading{
	flex: none;
	height: 112px;
	padding-left: 44px;
	font-size: 28px;
	font-weight: 500;
	line-height: 106px;
}
.browser{
	display: flex;
	flex: 1;
	min-height: 0;
}

/* 图标 */
.icons{
	flex: none;
	width: 896px;
	padding: 12px 0 0 20px;
}
.row{
	display: flex;
	gap: 20px;
	margin-bottom: 20px;
}
.cell{
	display: flex;
	align-items: center;
	justify-content: center;
	width: 60px;
	height: 60px;
	border-radius: 4px;
}
.cell.select{
	background: #c6c6c6;
}
.cell svg{
	width: 32px;
	height: 32px;
	overflow: visible;
	fill: #000;
	fill-rule: evenodd;
}
.ln{
	fill: none;
	stroke: #000;
	stroke-width: 3;
}
.w1{
	stroke-width: 1.300;
}
.w16{
	stroke-width: 1.600;
}
.w1h{
	stroke-width: 1.800;
}
.w2{
	stroke-width: 2.300;
}
.w3{
	stroke-width: 3;
}
.w35{
	stroke-width: 3.500;
}
.w4{
	stroke-width: 4;
}
.astr{
	stroke-width: 6;
	stroke-linecap: round;
}
.cut{
	fill: none;
	stroke: #f4f4f4;
	stroke-width: 2;
}
.w6{
	stroke-width: 6;
}
.soft{
	stroke: #000;
	stroke-width: 2;
	stroke-linejoin: round;
}
.softcut{
	stroke: #f4f4f4;
	stroke-width: 2;
}
.bgfill{
	fill: #f4f4f4;
}
.glyph{
	text-anchor: middle;
	font-family: "Liberation Sans", sans-serif;
	fill: #000;
}
.at{
	font-family: Roboto, sans-serif;
	font-size: 40px;
}
.be{
	font-size: 27px;
	font-weight: 700;
	letter-spacing: -1px;
}
.bes{
	font-size: 25px;
	font-weight: 700;
	letter-spacing: -1px;
	fill: #f4f4f4;
}
.serif{
	font-family: "Liberation Serif", serif;
	font-size: 48px;
	font-weight: 700;
}
.yen{
	font-size: 40px;
	font-weight: 700;
}
.yens{
	font-size: 20px;
	font-weight: 700;
}
.bars1{
	stroke-width: 24;
	stroke-dasharray: 1 .9 .4 .8 .4 .8 1 .8 .4 .7 .8 .8 .4 .8 .6 .8;
}
.bars2{
	stroke-width: 22;
	stroke-dasharray: 2 1.500 1 1.500 2 1 1 2 1.500 1;
}
.bars3{
	stroke-width: 2;
	stroke-dasharray: 1 2 1.500 2 1 1.500 2;
}
.dots{
	stroke-width: 1.800;
	stroke-dasharray: 2 2;
}
.dots2{
	stroke-width: 2;
	stroke-dasharray: 2 2;
}

/* 滚动条 */
.scrollbar{
	position: relative;
	flex: none;
	width: 24px;
	background: #f1f1f1;
}
.scrollthumb{
	height: 310px;
	margin-top: 22px;
	background: #b9b9b9;
}
.arrow{
	position: absolute;
	left: 5px;
	width: 0;
	height: 0;
	border-left: 7px solid transparent;
	border-right: 7px solid transparent;
}
.arrow.up{
	top: 4px;
	border-bottom: 8px solid #999;
}
.arrow.down{
	bottom: 12px;
	border-top: 8px solid #888;
}

/* 详情 */
.info{
	flex: 1;
	padding: 37px 0 0 48px;
}
.details{
	display: grid;
	grid-template-columns: 84.500px 247px;
	grid-template-rows: 38px 38px 54px 38px;
	gap: 12px 0;
	align-items: center;
}
.combo{
	display: flex;
	align-items: center;
	height: 46px;
	padding-left: 13px;
	border: 3px solid #aaa;
	border-radius: 6px;
	background: linear-gradient(#e6e6e6, #c8c8c8);
}
.chip{
	width: 24px;
	height: 24px;
	margin-right: 10px;
	border: 1px solid #b0b0b0;
	background: #000;
}
.combo span{
	flex: 1;
}
.caret{
	width: 0;
	height: 0;
	margin-right: 13px;
	border-left: 8px solid transparent;
	border-right: 8px solid transparent;
	border-top: 8px solid #555;
}
.preview{
	display: block;
	width: 224px;
	height: 224px;
	margin: 415px 0 0 140px;
	fill: #000;
}

/* 颜色下拉 */
.popup{
	position: absolute;
	left: 1052px;
	top: 427px;
	z-index: 2;
	width: 434px;
	height: 457px;
	padding: 25px 25px 0;
	border: 2px solid #a4a4a4;
	border-radius: 9px;
	background: linear-gradient(#f4f4f4 84%, #d4d4d4);
	box-shadow: 0 8px 20px rgba(0,0,0,.3), inset 0 0 22px rgba(0,0,0,.05);
	text-align: center;
}
.palette{
	display: grid;
	grid-template-columns: repeat(12, 30px);
	grid-auto-rows: 30px;
	gap: 2px;
}
.rule{
	width: 386px;
	height: 2px;
	margin: 21px 0 0 -3px;
	border: 0;
	background: #ccc;
	box-shadow: 0 1px 0 #fff;
}
.customlink{
	display: inline-block;
	margin-top: 32px;
	text-decoration: underline;
	color: #333;
}

/* 自定义颜色窗口 */
.dialog{
	position: absolute;
	left: 219px;
	top: 915px;
	z-index: 3;
	width: 1146px;
	height: 581px;
	border: 2px solid #c2c2c2;
	border-radius: 3px;
	background: #f4f4f4;
	box-shadow: 0 6px 22px rgba(0,0,0,.35);
}
.dialogtitle{
	position: relative;
	height: 45px;
	padding-left: 3px;
	background: linear-gradient(#f1f2fb, #f1f3f9 80%, #f4f4f4);
	font: 22.700px "Open Sans", sans-serif;
	line-height: 47px;
	color: #222;
}
.dialogclose{
	position: absolute;
	right: 0;
	top: 1px;
	display: flex;
	align-items: center;
	justify-content: center;
	width: 40px;
	height: 39px;
	background: #c75050;
}
.dialogclose svg{
	width: 12px;
	height: 12px;
	fill: none;
	stroke: #fff;
	stroke-width: 2;
}
.dialogbody{
	display: flex;
	padding: 31px 0 0 30px;
}
.sbarea{
	position: relative;
	flex: none;
	width: 471px;
	height: 471px;
	border: 2px solid #b8b8b8;
	background: linear-gradient(rgba(0,0,0,0), #000), linear-gradient(to right, #fff, #f00);
}
.cursor{
	position: absolute;
	left: -12px;
	bottom: -12px;
	width: 20px;
	height: 20px;
	border: 3px solid #eee;
	border-radius: 50%;
	box-shadow: 0 0 2px #555, inset 0 0 2px #555;
	background: rgba(200,200,200,.5);
}
.huebar{
	position: relative;
	flex: none;
	width: 40px;
	height: 471px;
	margin: 0 30px 0 19px;
	border: 2px solid #bbb;
	background: linear-gradient(#f00, #ff0, #0f0, #0ff, #00f, #f0f, #f00);
}
.huethumb{
	position: absolute;
	left: -7px;
	top: -12px;
	width: 50px;
	height: 20px;
	border: 3px solid #fff;
	border-radius: 8px;
	box-shadow: 0 0 3px #666, inset 0 5px 3px #999;
}
.controls{
	flex: none;
	width: 524px;
}
.swatchlabels{
	display: flex;
	align-items: center;
	height: 32px;
	margin-bottom: 2px;
	padding-left: 10px;
}
.swatchlabels span{
	flex: none;
	width: 262px;
}
.swatch{
	height: 42px;
	border: 4px solid #bbb;
	background: #000;
}
.panel{
	height: 204px;
	margin-top: 45px;
	padding: 0 0 0 18px;
	border: 4px solid #c8c8c8;
	border-radius: 6px;
	background: #fff;
}
.toggles{
	display: flex;
	justify-content: center;
	height: 46px;
	margin: -25px 0 8px -17px;
}
.toggle{
	width: 80px;
	border: 2px solid #b8b8b8;
	border-left-width: 1px;
	border-right-width: 1px;
	background: linear-gradient(#f0f0f0, #dcdcdc);
	line-height: 44px;
	text-align: center;
}
.toggle:last-child{
	border-right-width: 2px;
	border-radius: 0 6px 6px 0;
}
.toggle.on{
	width: 81px;
	border: 2px solid #0b9fd6;
	border-radius: 6px 0 0 6px;
	background: linear-gradient(#bdbdbd, #d0d0d0);
}
.field{
	display: flex;
	align-items: center;
	height: 45px;
	margin-bottom: 9px;
}
.field label{
	flex: none;
	width: 150px;
	padding-top: 2px;
}
.slider{
	position: relative;
	display: flex;
	align-items: center;
	flex: none;
	width: 188px;
	height: 28px;
}
.track{
	flex: 1;
	height: 11px;
	border: 2px solid #c8c8c8;
	border-radius: 6px;
	background: linear-gradient(#e4e4e4, #f8f8f8);
}
.thumb{
	position: absolute;
	left: -2px;
	top: 0;
	width: 28px;
	height: 28px;
	border: 2px solid #a0a0a0;
	border-radius: 50%;
	background: linear-gradient(#f2f2f2, #d8d8d8);
	box-shadow: 0 2px 4px rgba(0,0,0,.2);
}
.num{
	flex: none;
	width: 78px;
	height: 45px;
	margin: 0 10px 0 18px;
	padding-left: 14px;
	border: 2px solid #cacaca;
	border-radius: 4px;
	background: #fff;
	line-height: 44px;
}
.opacity{
	margin: 19px 0 0;
	padding-left: 22px;
}
.opacity label{
	width: 156px;
}
.opacity .slider{
	width: 190px;
}
.opacity .num{
	margin-left: 10px;
}
.opacity .thumb{
	left: auto;
	right: 0;
}
.actions{
	display: flex;
	justify-content: flex-end;
	gap: 8px;
	margin-top: 25px;
}
.btn{
	height: 55px;
	border: 2px solid #b8b8b8;
	border-radius: 5px;
	background: linear-gradient(#f2f2f2, #d8d8d8);
	font-size: 28px;
	font-weight: 500;
	line-height: 53px;
	text-align: center;
}
.save{
	width: 102px;
	border-color: #7fa9c0;
	background: linear-gradient(#b3dbef, #93c0d8);
}
.use{
	width: 88px;
}
.cancel{
	width: 126px;
}
```
